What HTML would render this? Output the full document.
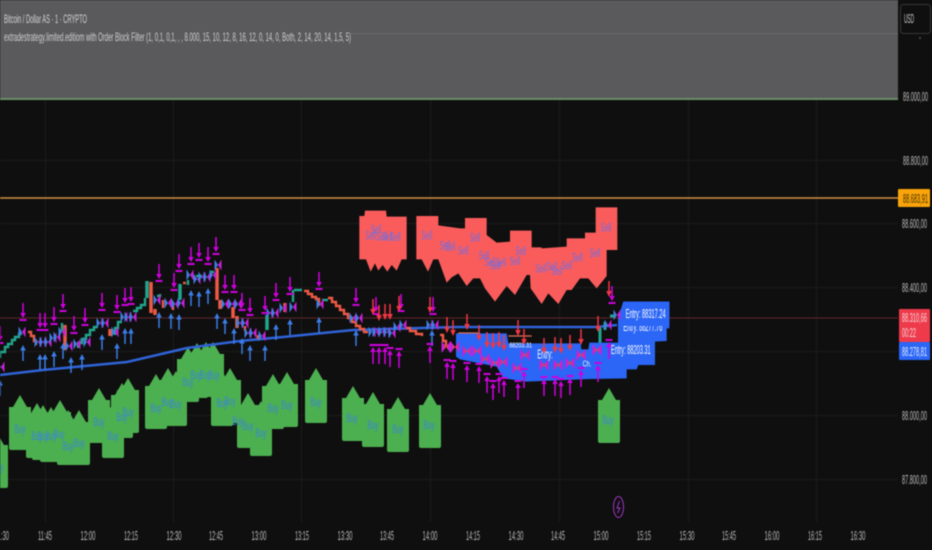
<!DOCTYPE html>
<html>
<head>
<meta charset="utf-8">
<style>
html,body{margin:0;padding:0;background:#0f0f0f;}
body{width:932px;height:550px;overflow:hidden;}
svg{display:block;filter:blur(0.4px);font-family:"Liberation Sans",sans-serif;}
.g line{stroke:#1b1b1b;stroke-width:1}
.p{fill:#bdbdbd;font-size:13px}
.t{fill:#b8b8b8;font-size:13px;text-anchor:middle}
.b{fill:#3a86d8;font-size:12px;text-anchor:middle}
.s{fill:#6b6fe6;font-size:36px;text-anchor:middle}
.e{fill:#fff;font-size:39px}
</style>
</head>
<body>
<svg width="932" height="550" viewBox="0 0 932 550" xmlns="http://www.w3.org/2000/svg">
<defs>
<path id="buy" fill="#4caf50" d="M0 0L7 12H11V53Q11 55 9 55H-9Q-11 55-11 53V12H-7Z"/>
<g id="up"><path d="M0 0L-2.800 5.500H2.800Z" fill="#3b7de8"/><path d="M0 4V16" stroke="#3b7de8" stroke-width="1.500"/></g>
<g id="dn"><path d="M0 0V11" stroke="#d000e0" stroke-width="1.500"/><path d="M-2.800 10H2.800L0 15Z" fill="#d000e0"/><rect x="-3.500" y="16" width="7" height="2" fill="#d000e0"/></g>
<g id="um"><rect x="-3.500" y="0" width="7" height="2" fill="#d000e0"/><path d="M-2.800 8H2.800L0 3Z" fill="#d000e0"/><path d="M0 7V20" stroke="#d000e0" stroke-width="1.500"/></g>
<g id="rd"><path d="M0 0V11" stroke="#f23645" stroke-width="1.500"/><path d="M-2.800 10H2.800L0 16Z" fill="#f23645"/></g>
<g id="bw"><path fill="#3f7fe0" d="M-3.500 -5.500L0 0L-3.500 5.500Z"/><path fill="#c81fd8" d="M3.500 -5.500L0 0L3.500 5.500Z"/></g>
<g id="bx"><path fill="#c81fd8" d="M-4.500 -6L0 0L-4.500 6ZM4.500 -6L0 0L4.500 6Z"/><path fill="#e0405a" d="M-2 -2.700L0 0L-2 2.700ZM2 -2.700L0 0L2 2.700Z"/></g>
</defs>

<rect width="932" height="550" fill="#0f0f0f"/>

<!-- grid -->
<g class="g">
<line x1="0" y1="160.500" x2="898" y2="160.500"/>
<line x1="0" y1="223.500" x2="898" y2="223.500"/>
<line x1="0" y1="287.500" x2="898" y2="287.500"/>
<line x1="0" y1="351.500" x2="898" y2="351.500"/>
<line x1="0" y1="415.500" x2="898" y2="415.500"/>
<line x1="0" y1="479.500" x2="898" y2="479.500"/>
<line x1="173.500" y1="100" x2="173.500" y2="522"/>
<line x1="301.500" y1="100" x2="301.500" y2="522"/>
<line x1="45.500" y1="100" x2="45.500" y2="522"/>
<line x1="430.500" y1="100" x2="430.500" y2="522"/>
<line x1="559.500" y1="100" x2="559.500" y2="522"/>
<line x1="688.500" y1="100" x2="688.500" y2="522"/>
<line x1="816.500" y1="100" x2="816.500" y2="522"/>
</g>

<!-- top grey pane -->
<rect x="0" y="0" width="898" height="98" fill="#5a5a5c"/>
<rect x="0" y="98" width="898" height="2" fill="#6c8f68"/>
<line x1="351" y1="33.500" x2="898" y2="33.500" stroke="#6a6a6c"/>
<text x="4" y="23" fill="#d4d4d4" font-size="12" textLength="83" lengthAdjust="spacingAndGlyphs">Bitcoin / Dollar AS · 1 · CRYPTO</text>
<text x="4" y="41" fill="#cfcfcf" font-size="12" textLength="347" lengthAdjust="spacingAndGlyphs">extradestrategy.limited.editiom with Order Block Filter (1, 0,1, 0,1, , , 8.000, 15, 10, 12, 8, 16, 12, 0, 14, 0, Both, 2, 14, 20, 14, 1,5, 5)</text>

<!-- level lines -->
<line x1="0" y1="198" x2="898" y2="198" stroke="#d48f42" stroke-width="1.500"/>
<line x1="0" y1="318" x2="898" y2="318" stroke="#5f2626" stroke-width="1"/>

<!-- buy blocks -->
<g>
<use href="#buy" x="-3" y="433"/><use href="#buy" x="20" y="395"/><use href="#buy" x="37" y="403"/><use href="#buy" x="43" y="405"/><use href="#buy" x="51" y="407"/><use href="#buy" x="60" y="400"/><use href="#buy" x="68" y="410"/><use href="#buy" x="79" y="410"/><use href="#buy" x="99" y="388"/><use href="#buy" x="113" y="403"/><use href="#buy" x="122" y="383"/><use href="#buy" x="128" y="378"/><use href="#buy" x="156" y="374"/><use href="#buy" x="168" y="368"/><use href="#buy" x="176" y="371"/><use href="#buy" x="188" y="347"/><use href="#buy" x="197" y="343"/><use href="#buy" x="206" y="342"/><use href="#buy" x="213" y="342"/><use href="#buy" x="222" y="371"/><use href="#buy" x="230" y="368"/><use href="#buy" x="248" y="393"/><use href="#buy" x="261" y="401"/><use href="#buy" x="273" y="374"/><use href="#buy" x="287" y="372"/><use href="#buy" x="316" y="368"/><use href="#buy" x="353" y="386"/><use href="#buy" x="373" y="392"/><use href="#buy" x="398" y="397"/><use href="#buy" x="430" y="393"/><use href="#buy" x="609" y="388"/>
</g>
<g>
<text class="b" x="-2" y="471" textLength="11" lengthAdjust="spacingAndGlyphs">Buy</text>
<text class="b" x="20" y="433" textLength="11" lengthAdjust="spacingAndGlyphs">Buy</text>
<text class="b" x="37" y="440" textLength="11" lengthAdjust="spacingAndGlyphs">Buy</text>
<text class="b" x="43" y="440" textLength="11" lengthAdjust="spacingAndGlyphs">Buy</text>
<text class="b" x="51" y="440" textLength="11" lengthAdjust="spacingAndGlyphs">Buy</text>
<text class="b" x="59" y="438" textLength="11" lengthAdjust="spacingAndGlyphs">Buy</text>
<text class="b" x="68" y="450" textLength="11" lengthAdjust="spacingAndGlyphs">Buy</text>
<text class="b" x="79" y="447" textLength="11" lengthAdjust="spacingAndGlyphs">Buy</text>
<text class="b" x="99" y="426" textLength="11" lengthAdjust="spacingAndGlyphs">Buy</text>
<text class="b" x="113" y="440" textLength="11" lengthAdjust="spacingAndGlyphs">Buy</text>
<text class="b" x="122" y="421" textLength="11" lengthAdjust="spacingAndGlyphs">Buy</text>
<text class="b" x="128" y="416" textLength="11" lengthAdjust="spacingAndGlyphs">Buy</text>
<text class="b" x="156" y="412" textLength="11" lengthAdjust="spacingAndGlyphs">Buy</text>
<text class="b" x="167" y="406" textLength="11" lengthAdjust="spacingAndGlyphs">Buy</text>
<text class="b" x="176" y="408" textLength="11" lengthAdjust="spacingAndGlyphs">Buy</text>
<text class="b" x="188" y="386" textLength="11" lengthAdjust="spacingAndGlyphs">Buy</text>
<text class="b" x="196" y="379" textLength="11" lengthAdjust="spacingAndGlyphs">Buy</text>
<text class="b" x="205" y="379" textLength="11" lengthAdjust="spacingAndGlyphs">Buy</text>
<text class="b" x="214" y="379" textLength="11" lengthAdjust="spacingAndGlyphs">Buy</text>
<text class="b" x="222" y="407" textLength="11" lengthAdjust="spacingAndGlyphs">Buy</text>
<text class="b" x="230" y="405" textLength="11" lengthAdjust="spacingAndGlyphs">Buy</text>
<text class="b" x="238" y="425" textLength="11" lengthAdjust="spacingAndGlyphs">Buy</text>
<text class="b" x="248" y="430" textLength="11" lengthAdjust="spacingAndGlyphs">Buy</text>
<text class="b" x="261" y="437" textLength="11" lengthAdjust="spacingAndGlyphs">Buy</text>
<text class="b" x="273" y="412" textLength="11" lengthAdjust="spacingAndGlyphs">Buy</text>
<text class="b" x="287" y="409" textLength="11" lengthAdjust="spacingAndGlyphs">Buy</text>
<text class="b" x="316" y="406" textLength="11" lengthAdjust="spacingAndGlyphs">Buy</text>
<text class="b" x="352" y="422" textLength="11" lengthAdjust="spacingAndGlyphs">Buy</text>
<text class="b" x="373" y="429" textLength="11" lengthAdjust="spacingAndGlyphs">Buy</text>
<text class="b" x="398" y="433" textLength="11" lengthAdjust="spacingAndGlyphs">Buy</text>
<text class="b" x="429" y="429" textLength="11" lengthAdjust="spacingAndGlyphs">Buy</text>
<text class="b" x="608" y="424" textLength="11" lengthAdjust="spacingAndGlyphs">Buy</text>
</g>

<!-- moving average -->
<path d="M0 375L43 370L127 362L187 348L240 341L283 337L353 330L457 327L597 327L617 325" fill="none" stroke="#2f63d8" stroke-width="2.600"/>

<!-- candles -->
<g fill="none" stroke-width="2.400" stroke-linejoin="miter">
<g stroke="#22a58c">
<path d="M0 358V352H5V347H8V344H12V340H15V337H19V334H22"/>
<path d="M62 323V331"/><path d="M78 348V343H82V339H86V335H90V330H94V327H98"/>
<path d="M115 335V328H118V322H122"/><path d="M133 311H137V308H141V305H145V298"/>
<path d="M147 298V281" stroke-width="3.500"/>
<path d="M157 296H160V294"/><path d="M180 284V300" stroke-width="3.500"/><path d="M188 280V285M196 276H202M210 272H214"/>
<path d="M267 315V330" stroke-width="3.500"/><path d="M293 290V302M294 290H302"/><path d="M322 300H328"/>
<path d="M600 328V344M605 322V330M610 316H616" stroke-width="3"/>
</g>
<g stroke="#ee5a45">
<path d="M28 332H31V336H34V341H36V345"/><path d="M65 325V350" stroke-width="3.500"/><path d="M110 329V336" stroke-width="3.500"/>
<path d="M151 282V313M155 309V315" stroke-width="3.500"/><path d="M163 300V308"/><path d="M173 302V310"/><path d="M183 283H186"/>
<path d="M217 268V300M220 300V309M233 307V318M237 316V328" stroke-width="3.500"/><path d="M245 326V331M258 335V339"/>
<path d="M285 303V312" stroke-width="3.500"/>
<path d="M304 291H308V294H312V297H316V299H319V306"/><path d="M328 298H332V302H336V306H340V310H344V314H348V318H352V322H356V326H360V329H364V332H368"/>
<path d="M405 328H410V331H416V334H422V336"/><path d="M440 335H443V341H446V346"/>
</g>
</g>

<!-- sell blocks + blue area in zoomed coordinates -->
<g transform="translate(340 200) scale(0.33333)">
<path fill="#fa5c5c" d="M58 48H73L75 32H138L140 50H200V178H185L170 212L155 195L142 215L128 195L115 212L105 190L92 215L78 178H58Z"/>
<path fill="#fa5c5c" d="M229 178H245L264 215L280 178H295L320 248L335 232L355 220L380 258L400 235H420L435 265L465 305L500 258L525 285L560 225H570L572 265L605 312L625 280L655 312L680 270H695L720 235H745L770 265L800 228V150H832V22H767V98H735V115H680V140L605 145V142H575V92H510V125L470 128L440 105V54H375V85H360L295 76V48H229Z"/>
<g class="s">
<text x="92" y="118" textLength="32" lengthAdjust="spacingAndGlyphs">Sell</text>
<text x="108" y="101" textLength="32" lengthAdjust="spacingAndGlyphs">Sell</text>
<text x="125" y="121" textLength="32" lengthAdjust="spacingAndGlyphs">Sell</text>
<text x="142" y="121" textLength="32" lengthAdjust="spacingAndGlyphs">Sell</text>
<text x="166" y="123" textLength="32" lengthAdjust="spacingAndGlyphs">Sell</text>
<text x="260" y="118" textLength="32" lengthAdjust="spacingAndGlyphs">Sell</text>
<text x="315" y="148" textLength="32" lengthAdjust="spacingAndGlyphs">Sell</text>
<text x="330" y="153" textLength="32" lengthAdjust="spacingAndGlyphs">Sell</text>
<text x="370" y="163" textLength="32" lengthAdjust="spacingAndGlyphs">Sell</text>
<text x="405" y="125" textLength="32" lengthAdjust="spacingAndGlyphs">Sell</text>
<text x="432" y="178" textLength="32" lengthAdjust="spacingAndGlyphs">Sell</text>
<text x="450" y="198" textLength="32" lengthAdjust="spacingAndGlyphs">Sell</text>
<text x="465" y="208" textLength="32" lengthAdjust="spacingAndGlyphs">Sell</text>
<text x="482" y="200" textLength="32" lengthAdjust="spacingAndGlyphs">Sell</text>
<text x="525" y="195" textLength="32" lengthAdjust="spacingAndGlyphs">Sell</text>
<text x="542" y="165" textLength="32" lengthAdjust="spacingAndGlyphs">Sell</text>
<text x="602" y="218" textLength="32" lengthAdjust="spacingAndGlyphs">Sell</text>
<text x="635" y="211" textLength="32" lengthAdjust="spacingAndGlyphs">Sell</text>
<text x="650" y="225" textLength="32" lengthAdjust="spacingAndGlyphs">Sell</text>
<text x="680" y="208" textLength="32" lengthAdjust="spacingAndGlyphs">Sell</text>
<text x="712" y="185" textLength="32" lengthAdjust="spacingAndGlyphs">Sell</text>
<text x="765" y="171" textLength="32" lengthAdjust="spacingAndGlyphs">Sell</text>
<text x="798" y="95" textLength="32" lengthAdjust="spacingAndGlyphs">Sell</text>
</g>
<path fill="#2b66f6" d="M348 400H500L505 430H722L724 448H745L748 428H834V354L850 305H988V385H980V423L945 425V495H895L890 508H860V535L750 537L560 545L490 535L470 500L360 478L348 470Z"/>
<path d="M355 399H420" stroke="#e0705a" stroke-width="4"/><path d="M505 408H575" stroke="#e0705a" stroke-width="4"/>
<g class="e">
<text x="850" y="393" textLength="117" lengthAdjust="spacingAndGlyphs">Entry: 88277.76</text>
<path fill="#2b66f6" d="M836 354L850 305H988V378H836Z"/>
<text x="857" y="354" textLength="120" lengthAdjust="spacingAndGlyphs">Entry: 88317.24</text>
<text x="813" y="462" textLength="119" lengthAdjust="spacingAndGlyphs">Entry: 88203.31</text>
<text x="592" y="476" textLength="46" lengthAdjust="spacingAndGlyphs">Entry:</text>
<text x="508" y="442" textLength="68" lengthAdjust="spacingAndGlyphs" font-size="22">88203.31</text>
<text x="728" y="500" textLength="26" lengthAdjust="spacingAndGlyphs" font-size="26">Ch.</text>
</g>
</g>

<!-- blue up arrows -->
<g>
<use href="#up" x="0" y="380"/><use href="#up" x="23" y="345"/><use href="#up" x="40" y="354"/><use href="#up" x="45" y="354"/><use href="#up" x="54" y="351"/><use href="#up" x="63" y="343"/><use href="#up" x="71" y="357"/><use href="#up" x="82" y="354"/><use href="#up" x="102" y="334"/><use href="#up" x="117" y="343"/><use href="#up" x="125" y="328"/><use href="#up" x="131" y="328"/><use href="#up" x="159" y="312"/><use href="#up" x="171" y="313"/><use href="#up" x="179" y="314"/><use href="#up" x="191" y="290"/><use href="#up" x="199" y="291"/><use href="#up" x="208" y="288"/><use href="#up" x="217" y="313"/><use href="#up" x="225" y="318"/><use href="#up" x="234" y="328"/><use href="#up" x="242" y="338"/><use href="#up" x="250" y="345"/><use href="#up" x="265" y="345"/><use href="#up" x="276" y="324"/><use href="#up" x="290" y="319"/><use href="#up" x="319" y="317"/><use href="#up" x="356" y="330"/><use href="#up" x="432" y="330"/>
</g>

<!-- bow ties -->
<g>
<use href="#bw" x="1" y="367"/><use href="#bw" x="22" y="332"/><use href="#bw" x="38" y="342"/><use href="#bw" x="43" y="342"/><use href="#bw" x="48" y="342"/><use href="#bw" x="53" y="338"/><use href="#bw" x="57" y="337"/><use href="#bw" x="62" y="332"/><use href="#bw" x="69" y="346"/><use href="#bw" x="77" y="344"/><use href="#bw" x="87" y="342"/><use href="#bw" x="100" y="323"/><use href="#bw" x="105" y="323"/><use href="#bw" x="115" y="332"/><use href="#bw" x="124" y="317"/><use href="#bw" x="128" y="317"/><use href="#bw" x="133" y="317"/><use href="#bw" x="157" y="300"/><use href="#bw" x="168" y="303"/><use href="#bw" x="175" y="304"/><use href="#bw" x="181" y="303"/><use href="#bw" x="190" y="275"/><use href="#bw" x="197" y="279"/><use href="#bw" x="202" y="277"/><use href="#bw" x="207" y="277"/><use href="#bw" x="213" y="275"/><use href="#bw" x="218" y="265"/><use href="#bw" x="225" y="304"/><use href="#bw" x="232" y="304"/><use href="#bw" x="238" y="304"/><use href="#bw" x="240" y="323"/><use href="#bw" x="245" y="323"/><use href="#bw" x="248" y="333"/><use href="#bw" x="253" y="333"/><use href="#bw" x="262" y="336"/><use href="#bw" x="270" y="313"/><use href="#bw" x="275" y="313"/><use href="#bw" x="283" y="308"/><use href="#bw" x="293" y="307"/><use href="#bw" x="320" y="304"/><use href="#bw" x="353" y="318"/><use href="#bw" x="359" y="318"/><use href="#bw" x="372" y="332"/><use href="#bw" x="376" y="332"/><use href="#bw" x="382" y="332"/><use href="#bw" x="387" y="332"/><use href="#bw" x="392" y="333"/><use href="#bw" x="397" y="327"/><use href="#bw" x="403" y="325"/><use href="#bw" x="430" y="325"/><use href="#bw" x="435" y="325"/><use href="#bx" x="446" y="347"/><use href="#bx" x="455" y="347"/><use href="#bx" x="467" y="351"/><use href="#bx" x="477" y="351"/><use href="#bx" x="485" y="359"/><use href="#bx" x="495" y="363"/><use href="#bx" x="503" y="362"/><use href="#bx" x="517" y="368"/><use href="#bx" x="525" y="355"/><use href="#bx" x="544" y="365"/><use href="#bx" x="558" y="365"/><use href="#bx" x="570" y="363"/><use href="#bx" x="581" y="355"/><use href="#bx" x="597" y="350"/><use href="#bw" x="608" y="325"/><use href="#bw" x="617" y="315"/>
</g>

<!-- magenta down arrows -->
<g>
<use href="#dn" x="0" y="326"/><use href="#dn" x="23" y="303"/><use href="#dn" x="40" y="313"/><use href="#dn" x="45" y="313"/><use href="#dn" x="54" y="307"/><use href="#dn" x="63" y="294"/><use href="#dn" x="74" y="316"/><use href="#dn" x="85" y="308"/><use href="#dn" x="102" y="293"/><use href="#dn" x="117" y="295"/><use href="#dn" x="125" y="288"/><use href="#dn" x="131" y="287"/><use href="#dn" x="159" y="264"/><use href="#dn" x="174" y="273"/><use href="#dn" x="179" y="254"/><use href="#dn" x="191" y="247"/><use href="#dn" x="199" y="243"/><use href="#dn" x="208" y="247"/><use href="#dn" x="216" y="237"/><use href="#dn" x="225" y="275"/><use href="#dn" x="234" y="275"/><use href="#dn" x="242" y="293"/><use href="#dn" x="250" y="298"/><use href="#dn" x="265" y="296"/><use href="#dn" x="276" y="283"/><use href="#dn" x="290" y="277"/><use href="#dn" x="319" y="272"/><use href="#dn" x="356" y="288"/><use href="#dn" x="376" y="297"/><use href="#dn" x="401" y="294"/><use href="#dn" x="433" y="297"/><use href="#dn" x="612" y="286"/>
</g>

<!-- red down arrows -->
<g>
<use href="#rd" x="373" y="299"/><use href="#rd" x="379" y="305"/><use href="#rd" x="385" y="304"/><use href="#rd" x="390" y="304"/><use href="#rd" x="399" y="296"/><use href="#rd" x="430" y="297"/><use href="#rd" x="447" y="317"/><use href="#rd" x="453" y="320"/><use href="#rd" x="467" y="314"/><use href="#rd" x="479" y="325"/><use href="#rd" x="487" y="332"/><use href="#rd" x="493" y="333"/><use href="#rd" x="499" y="332"/><use href="#rd" x="504" y="335"/><use href="#rd" x="518" y="320"/><use href="#rd" x="524" y="329"/><use href="#rd" x="544" y="338"/><use href="#rd" x="555" y="337"/><use href="#rd" x="561" y="338"/><use href="#rd" x="570" y="335"/><use href="#rd" x="581" y="329"/><use href="#rd" x="598" y="316"/><use href="#rd" x="609" y="281"/>
</g>

<!-- magenta up arrows -->
<g>
<use href="#um" x="373" y="344"/><use href="#um" x="379" y="344"/><use href="#um" x="385" y="344"/><use href="#um" x="390" y="347"/><use href="#um" x="399" y="348"/><use href="#um" x="430" y="343"/><use href="#um" x="447" y="359"/><use href="#um" x="453" y="360"/><use href="#um" x="467" y="362"/><use href="#um" x="479" y="363"/><use href="#um" x="487" y="373"/><use href="#um" x="493" y="380"/><use href="#um" x="499" y="373"/><use href="#um" x="504" y="377"/><use href="#um" x="518" y="380"/><use href="#um" x="524" y="368"/><use href="#um" x="544" y="376"/><use href="#um" x="555" y="376"/><use href="#um" x="561" y="378"/><use href="#um" x="570" y="375"/><use href="#um" x="581" y="367"/><use href="#um" x="598" y="362"/><use href="#um" x="609" y="339"/>
</g>

<!-- right scale -->
<rect x="900.500" y="4.500" width="30" height="29" rx="3" fill="none" stroke="#363636"/>
<text x="904" y="23" fill="#d0d0d0" font-size="13" textLength="10" lengthAdjust="spacingAndGlyphs">USD</text>
<circle cx="920" cy="38" r="0.800" fill="#777"/>
<text class="p" x="903" y="101" textLength="25" lengthAdjust="spacingAndGlyphs">89.000,00</text>
<text class="p" x="903" y="165" textLength="25" lengthAdjust="spacingAndGlyphs">88.800,00</text>
<text class="p" x="902" y="228" textLength="25" lengthAdjust="spacingAndGlyphs">88.600,00</text>
<text class="p" x="902" y="292" textLength="25" lengthAdjust="spacingAndGlyphs">88.400,00</text>
<text class="p" x="902" y="420" textLength="25" lengthAdjust="spacingAndGlyphs">88.000,00</text>
<text class="p" x="902" y="484" textLength="25" lengthAdjust="spacingAndGlyphs">87.800,00</text>

<rect x="898" y="189" width="32" height="18" rx="1" fill="#f9a40a"/>
<text x="903" y="203" fill="#4a3200" font-size="13" textLength="25" lengthAdjust="spacingAndGlyphs">88.683,91</text>

<rect x="899" y="309" width="31" height="33" rx="1" fill="#ee3a4b"/>
<text x="902" y="322" fill="#f5d5d8" font-size="13" textLength="25" lengthAdjust="spacingAndGlyphs">88.310,66</text>
<text x="902" y="337" fill="#f5d5d8" font-size="13" textLength="14" lengthAdjust="spacingAndGlyphs">00:22</text>
<rect x="899" y="342" width="31" height="18" rx="1" fill="#2b66f6"/>
<text x="902" y="356" fill="#e6eeff" font-size="13" textLength="25" lengthAdjust="spacingAndGlyphs">88.278,81</text>

<!-- lightning marker -->
<ellipse cx="618.500" cy="507" rx="5" ry="10.500" fill="none" stroke="#a035c8" stroke-width="1"/>
<path d="M619.500 501L617 508H620L617.500 513" fill="none" stroke="#a035c8" stroke-width="1"/>

<!-- time axis -->
<g>
<text class="t" x="2" y="540" textLength="14" lengthAdjust="spacingAndGlyphs">11:30</text>
<text class="t" x="45" y="540" textLength="14" lengthAdjust="spacingAndGlyphs">11:45</text>
<text class="t" x="88" y="540" textLength="15" lengthAdjust="spacingAndGlyphs">12:00</text>
<text class="t" x="131" y="540" textLength="14" lengthAdjust="spacingAndGlyphs">12:15</text>
<text class="t" x="174" y="540" textLength="15" lengthAdjust="spacingAndGlyphs">12:30</text>
<text class="t" x="216" y="540" textLength="14" lengthAdjust="spacingAndGlyphs">12:45</text>
<text class="t" x="259" y="540" textLength="15" lengthAdjust="spacingAndGlyphs">13:00</text>
<text class="t" x="302" y="540" textLength="14" lengthAdjust="spacingAndGlyphs">13:15</text>
<text class="t" x="345" y="540" textLength="15" lengthAdjust="spacingAndGlyphs">13:30</text>
<text class="t" x="387" y="540" textLength="14" lengthAdjust="spacingAndGlyphs">13:45</text>
<text class="t" x="430" y="540" textLength="15" lengthAdjust="spacingAndGlyphs">14:00</text>
<text class="t" x="473" y="540" textLength="14" lengthAdjust="spacingAndGlyphs">14:15</text>
<text class="t" x="516" y="540" textLength="15" lengthAdjust="spacingAndGlyphs">14:30</text>
<text class="t" x="558" y="540" textLength="14" lengthAdjust="spacingAndGlyphs">14:45</text>
<text class="t" x="601" y="540" textLength="15" lengthAdjust="spacingAndGlyphs">15:00</text>
<text class="t" x="644" y="540" textLength="14" lengthAdjust="spacingAndGlyphs">15:15</text>
<text class="t" x="687" y="540" textLength="15" lengthAdjust="spacingAndGlyphs">15:30</text>
<text class="t" x="729" y="540" textLength="14" lengthAdjust="spacingAndGlyphs">15:45</text>
<text class="t" x="772" y="540" textLength="15" lengthAdjust="spacingAndGlyphs">16:00</text>
<text class="t" x="815" y="540" textLength="14" lengthAdjust="spacingAndGlyphs">16:15</text>
<text class="t" x="858" y="540" textLength="15" lengthAdjust="spacingAndGlyphs">16:30</text>
</g>
</svg>
</body>
</html>
